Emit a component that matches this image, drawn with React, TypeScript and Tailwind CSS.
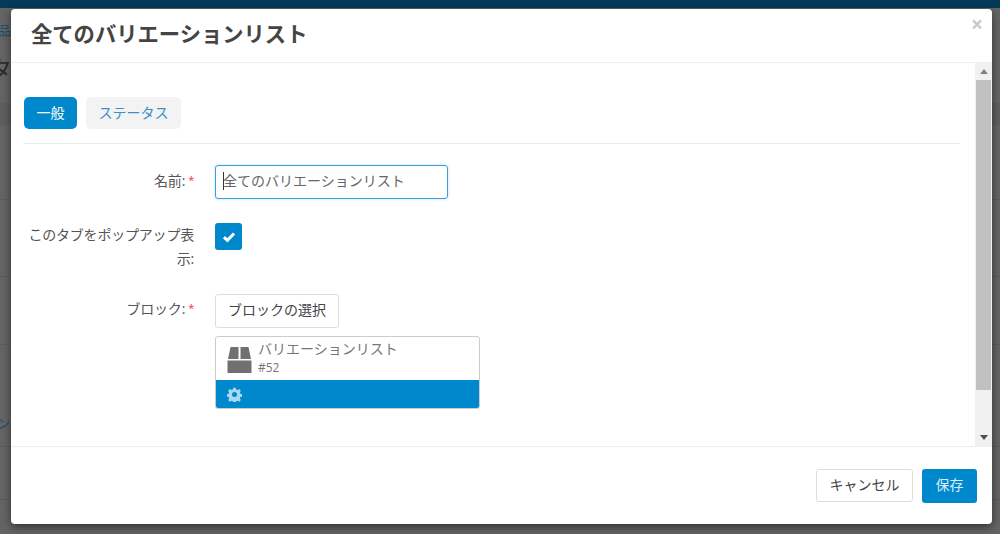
import React from "react";

const font = { fontFamily: '"Open Sans","Noto Sans CJK JP",sans-serif' };

function Backdrop() {
  return (
    <div className="h-[534px] w-[1000px] overflow-hidden bg-[#646464] text-[#2c2c2c]">
      <div className="h-[8px] bg-[#033a57]" />
      <div className="h-[95px] overflow-hidden whitespace-nowrap">
        <div className="mt-[13px] h-[30px] text-[13px] leading-[18px] text-[#1c4f6b] [text-indent:-2px]">品</div>
        <div className="text-[24px] leading-[36px] [text-indent:-12px]">タ</div>
      </div>
      <div className="h-[22px] bg-[#5e5e5e]" />
      <div className="h-[75px] border-b border-[#5c5c5c]" />
      <div className="h-[77px] border-b border-[#5c5c5c]" />
      <div className="h-[68px] border-b border-[#5c5c5c]" />
      <div className="h-[102px] overflow-hidden whitespace-nowrap border-b border-[#5c5c5c] pt-[69px] text-[13px] leading-[18px] text-[#1c4f6b] [text-indent:-3px]">ン</div>
      <div className="h-[53px] border-b border-[#5c5c5c]" />
    </div>
  );
}

function Label({ children, className = "" }: { children: React.ReactNode; className?: string }) {
  return (
    <div className={`w-[170px] shrink-0 text-right text-[14px] leading-[24px] tracking-[-0.2px] text-[#555555] ${className}`}>{children}</div>
  );
}

const Star = () => <span className="ml-[3px] inline-block align-top text-[11px] leading-[22px] text-[#ee3355]">*</span>;

export default function App() {
  return (
    <div className="relative h-[534px] w-[1000px] overflow-hidden" style={font}>
      <Backdrop />
      <div className="absolute left-[11px] top-[9px] flex h-[515px] w-[981px] flex-col rounded-[4px] bg-white shadow-[0_3px_9px_rgba(0,0,0,0.5)]">
        <div className="relative h-[54px] shrink-0 border-b border-[#eeeeee] pl-[20px]">
          <h4 className="text-[21.3px] font-bold leading-[50px] text-[#444444]">全てのバリエーションリスト</h4>
          <span className="absolute right-[9px] top-[3px] text-[21px] font-bold leading-[24px] text-[#c8c8c8]">×</span>
        </div>
        <div className="flex min-h-0 flex-1">
          <div className="min-w-0 flex-1 pl-[13px] pr-[15px] pt-[34px]">
            <div className="flex gap-[9px] border-b border-[#e8ecef] pb-[14px]">
              <div className="flex h-[32px] w-[53px] items-center justify-center rounded-[5px] bg-[#0088cc] pb-[2px] text-[14px] text-white">一般</div>
              <div className="flex h-[32px] w-[95px] items-center justify-center rounded-[5px] bg-[#f3f3f3] pb-[2px] text-[14px] text-[#3a8fc9]">ステータス</div>
            </div>
            <div className="mt-[21px] flex gap-[21px]">
              <Label className="pt-[4px]">名前:<Star /></Label>
              <div className="flex h-[34px] w-[233px] items-center rounded-[3px] border border-[#3b9fdb] pb-[3px] pl-[7px] text-[14px] text-[#666666] shadow-[0_0_3px_rgba(82,168,236,0.4)]">
                <span className="-mr-px h-[18px] w-px bg-[#333333]" />全てのバリエーションリスト
              </div>
            </div>
            <div className="mt-[24px] flex gap-[21px]">
              <Label>このタブをポップアップ表示:</Label>
              <div className="flex h-[27px] w-[27px] items-center justify-center rounded-[3px] bg-[#0088cc]">
                <svg width="14" height="12" viewBox="0 0 13 11" fill="none"><path d="M1.8 5.6 5 8.6 11.2 2.2" stroke="#fff" strokeWidth="2.8" /></svg>
              </div>
            </div>
            <div className="mt-[23px] flex gap-[21px]">
              <Label className="pt-[3px]">ブロック:<Star /></Label>
              <div className="flex flex-col">
                <div className="flex h-[34px] w-[124px] items-center justify-center rounded-[3px] border border-[#dddddd] pb-[3px] text-[14px] text-[#444444]">ブロックの選択</div>
                <div className="mt-[8px] w-[265px] overflow-hidden rounded-[3px] border border-[#cccccc]">
                  <div className="flex h-[43px] gap-[6px] pl-[11px]">
                    <svg className="mt-[10px]" width="25" height="26" viewBox="0 0 24 26" fill="#707070">
                      <path d="M3 0h8v12H0.500zM13 0h8l2.500 12H13zM0 13.500h24V26H0z" />
                    </svg>
                    <div>
                      <div className="mt-[2px] text-[14px] leading-[20px] text-[#777777]">バリエーションリスト</div>
                      <div className="text-[12px] leading-[17px] text-[#777777]">#52</div>
                    </div>
                  </div>
                  <div className="flex h-[28px] items-center bg-[#0088cc] pl-[11px]">
                    <svg width="15" height="15" viewBox="0 0 24 24" fill="#a8d8f0" fillRule="evenodd">
                      <path d="M10 1h4l.6 3 2.200.9 2.600-1.700 2.800 2.800-1.700 2.600.9 2.200 3 .6v4l-3 .6-.9 2.200 1.700 2.600-2.800 2.800-2.600-1.700-2.200.9-.6 3h-4l-.6-3-2.200-.9-2.600 1.700-2.800-2.800 1.700-2.600-.9-2.200-3-.6v-4l3-.6.9-2.200-1.700-2.600 2.800-2.800 2.600 1.700 2.200-.9zM12 8a4 4 0 1 0 0 8 4 4 0 0 0 0-8z" />
                    </svg>
                  </div>
                </div>
              </div>
            </div>
          </div>
          <div className="flex w-[17px] shrink-0 flex-col bg-[#f1f1f1]">
            <div className="flex h-[17px] items-center justify-center">
              <svg width="8" height="5" viewBox="0 0 8 5" fill="#808080"><path d="M4 0l4 5H0z" /></svg>
            </div>
            <div className="mx-px h-[310px] bg-[#c1c1c1]" />
            <div className="flex-1" />
            <div className="flex h-[17px] items-center justify-center">
              <svg width="8" height="5" viewBox="0 0 8 5" fill="#505050"><path d="M0 0h8L4 5z" /></svg>
            </div>
          </div>
        </div>
        <div className="flex h-[78px] shrink-0 items-start justify-end gap-[9px] border-t border-[#eeeeee] pr-[15px] pt-[22px]">
          <div className="flex h-[33px] w-[97px] items-center justify-center rounded-[3px] border border-[#dddddd] pb-[3px] text-[14px] text-[#444444]">キャンセル</div>
          <div className="flex h-[34px] w-[55px] items-center justify-center rounded-[3px] bg-[#0088cc] pb-[3px] text-[14px] text-[#d8eef8]">保存</div>
        </div>
      </div>
    </div>
  );
}
